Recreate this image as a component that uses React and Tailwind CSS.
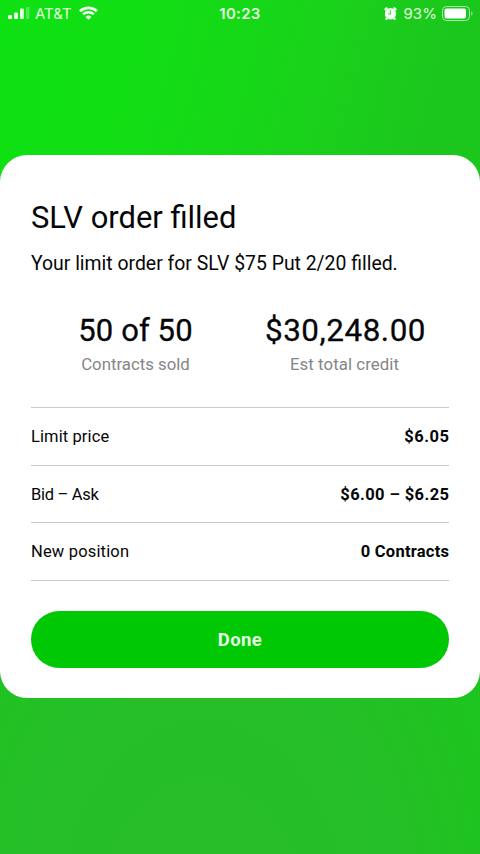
const rows = [
  { label: 'Limit price', value: '$6.05', labelTracking: 'tracking-[0.1px]', valueTracking: 'tracking-[0.5px] -mr-[0.5px]' },
  { label: 'Bid – Ask', value: '$6.00 – $6.25', labelTracking: 'tracking-[-0.3px]', valueTracking: 'tracking-[0.4px] -mr-[0.4px]' },
  { label: 'New position', value: '0 Contracts', labelTracking: 'tracking-[0.17px]', valueTracking: 'tracking-[0.25px] -mr-[0.25px]' },
];

function Signal() {
  return (
    <svg className="ml-2 h-[12px] w-[22px]" viewBox="0 0 22 12" fill="#e9ffe6">
      <rect x="0" y="8" width="4" height="4" rx="1" />
      <rect x="6" y="5.6" width="4" height="6.4" rx="1" />
      <rect x="12" y="1.6" width="3.8" height="10.4" rx="1" />
      <rect x="18" y="0" width="3.5" height="12" rx="1" opacity="0.3" />
    </svg>
  );
}

function Wifi() {
  return (
    <svg className="ml-[7px] h-[14px] w-[19px]" viewBox="0 0 18 14" preserveAspectRatio="none" fill="none" stroke="#f1fff0" strokeWidth="2.6">
      <path d="M0.9 5.2 A11.6 11.6 0 0 1 17.1 5.2" />
      <path d="M3.9 8.4 A7.3 7.3 0 0 1 14.1 8.4" />
      <path d="M9 13.8 L6.2 10.9 A4 4 0 0 1 11.8 10.9 Z" fill="#f1fff0" stroke="none" />
    </svg>
  );
}

function Alarm() {
  return (
    <svg className="h-[13px] w-[13px]" viewBox="0 0 13 13">
      <g stroke="#effff0" strokeWidth="2.2" strokeLinecap="round">
        <path d="M1.4 2.3 L2.6 1.3 M11.6 2.3 L10.4 1.3 M2.3 11.8 L3.5 10.8 M10.7 11.8 L9.5 10.8" />
      </g>
      <circle cx="6.5" cy="6.7" r="5.7" fill="#effff0" />
      <path d="M6.5 3.5 V6.9 H4" fill="none" stroke="#1fc31f" strokeOpacity="0.8" strokeWidth="1" />
    </svg>
  );
}

function Battery() {
  return (
    <svg className="ml-[5px] h-[15px] w-[31px]" viewBox="0 0 31 15">
      <rect x="0.5" y="0.5" width="27" height="14" rx="4" fill="none" stroke="#fff" strokeOpacity="0.6" />
      <rect x="2.5" y="2.5" width="21.5" height="10" rx="2" fill="#fff" />
      <path d="M29.3 5.2 V9.8 C31 9 31 6 29.3 5.2 Z" fill="#fff" opacity="0.6" />
    </svg>
  );
}

function StatusBar() {
  return (
    <header className="grid h-[26px] grid-cols-3 items-center font-['Inter',sans-serif] text-[15px] leading-none text-[#e3ffdf]">
      <div className="flex items-center">
        <Signal />
        <span className="ml-[5px] text-[15px]">AT&amp;T</span>
        <Wifi />
      </div>
      <div className="text-center font-semibold tracking-[0.3px]">10:23</div>
      <div className="flex items-center justify-end pr-[7px]">
        <Alarm />
        <span className="ml-[6px] tracking-[0.1px]">93%</span>
        <Battery />
      </div>
    </header>
  );
}

export default function App() {
  return (
    <div className="flex h-[854px] w-[480px] flex-col overflow-hidden bg-[radial-gradient(ellipse_440px_620px_at_42%_108%,#28bd28_0%,#25bf27_45%,#1fc320_65%,#1cc61d00_100%),linear-gradient(105deg,#0ee112_0%,#11df14_22%,#19d21a_46%,#1cc71d_65%,#18c81a_100%)] font-['Roboto',sans-serif]">
      <StatusBar />
      <main className="mt-[129px] flex h-[543px] flex-col rounded-[27px] bg-white px-[31px] text-[#050607]">
        <h1 className="mt-[44px] h-[38px] text-[30.9px] leading-[38px] whitespace-nowrap">SLV order filled</h1>
        <p className="mt-[15px] h-[24px] text-[19.4px] leading-[24px] whitespace-nowrap">Your limit order for SLV $75 Put 2/20 filled.</p>
        <section className="mt-[36px] grid grid-cols-2 text-center whitespace-nowrap">
          <div>
            <div className="text-[31px] leading-[38px] tracking-[0.1px] [-webkit-text-stroke:0.3px_#050607]">50 of 50</div>
            <div className="mt-[4px] text-[16.8px] leading-[20px] text-[#858687]">Contracts sold</div>
          </div>
          <div>
            <div className="pl-[2px] text-[31.4px] leading-[38px] tracking-[0.55px] [-webkit-text-stroke:0.3px_#050607]">$30,248.00</div>
            <div className="mt-[4px] text-[16.8px] leading-[20px] tracking-[0.08px] text-[#858687]">Est total credit</div>
          </div>
        </section>
        <dl className="mt-[33px] border-t border-[#cbcbcb] text-[16.5px]">
          {rows.map((row) => (
            <div key={row.label} className="flex h-[57.7px] items-center justify-between border-b border-[#cbcbcb] pt-[2px]">
              <dt className={row.labelTracking}>{row.label}</dt>
              <dd className={`font-bold ${row.valueTracking}`}>{row.value}</dd>
            </div>
          ))}
        </dl>
        <button className="mt-[30px] h-[57px] rounded-full bg-[#00c805] pt-[2px] text-[18.5px] font-bold tracking-[0.4px] text-[#e5ffe2]">Done</button>
      </main>
    </div>
  );
}
